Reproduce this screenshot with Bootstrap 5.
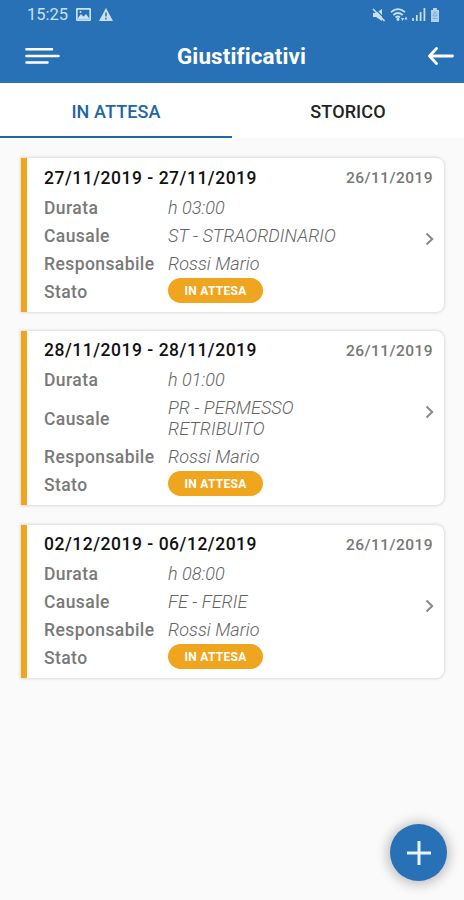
<!DOCTYPE html>
<html lang="it">
<head>
<meta charset="utf-8">
<meta name="viewport" content="width=device-width, initial-scale=1">
<title>Giustificativi</title>
<link href="https://cdn.jsdelivr.net/npm/bootstrap@5.3.0/dist/css/bootstrap.min.css" rel="stylesheet">
<style>
body{font-family:Roboto,"Liberation Sans",sans-serif;background:#fafafa;min-height:900px;overflow:hidden}
svg{display:block}
.topbar{background:#2871b6;height:83px;color:#fff}
.statusbar{height:29px;padding:0 24px 0 27px;color:#c9e1f5;font-size:16.5px}
.clock{padding-top:2px}
.titlebar{height:54px;padding:0 10px 0 25px}
.titlebar h1{font-size:22.4px;font-weight:700;line-height:56px;letter-spacing:.15px;padding-right:4px}
.tabs{height:55px;background:#fff}
.tabs a{font-size:18px;font-weight:500;color:#222;letter-spacing:.1px;border-bottom:2px solid transparent;padding-top:3px}
.tabs a.current{color:#2265a3;border-color:#1d66a8}
.requests{padding:20px 20px 0 21px;gap:19px}
.request{border:0;border-left:6px solid #f0a51f;border-radius:0 8px 8px 0;box-shadow:0 0 3px 1px rgba(0,0,0,.13);padding:5px 10px 6px 17px}
.period{font-size:17.5px;font-weight:500;color:#111;letter-spacing:.52px;line-height:30px;height:29px}
.sent{font-size:15.5px;font-weight:500;color:#777;letter-spacing:.45px;line-height:29px;padding:1px 1px 0 0;height:29px}
.fields{display:grid;grid-template-columns:124px 185px;grid-auto-rows:minmax(28px,auto);align-items:center;padding-top:2px;margin:0}
.request + .request .fields{padding-top:1px}
.request + .request .period{line-height:29px}
.request:last-child{margin-top:1px}
.fields dt{font-size:17.5px;font-weight:500;color:#797979;letter-spacing:.42px;line-height:28px}
.fields dd{font-size:18px;font-weight:300;font-style:italic;color:#646464;margin:0;padding-bottom:1px;line-height:21px;letter-spacing:.06px}
.fields dd.two-lines{padding:3px 0 4px}
.state{font-size:12px;font-weight:700;font-style:normal;letter-spacing:.3px;background:#f0a51f;width:95px;height:25px;padding:0;line-height:26px;display:block;margin-top:-2px}
.chevron{margin-bottom:20px}
.chevron-tall{margin-bottom:41px}
.fab{width:57px;height:57px;right:17px;bottom:19px;background:#2871b6;box-shadow:0 1px 12px 3px rgba(0,0,0,.23)}
</style>
</head>
<body>
<header class="topbar">
  <div class="statusbar d-flex align-items-center justify-content-between">
    <div class="d-flex align-items-center">
      <span class="clock">15:25</span>
      <svg class="ms-2" width="15" height="13" viewBox="0 0 15 13"><rect x=".8" y=".8" width="13.4" height="11.4" rx="1" fill="none" stroke="currentColor" stroke-width="1.8"/><path d="M2 10l3-4 2.5 2.5L10 6l3 4v1H2z" fill="currentColor"/><circle cx="4.5" cy="4" r="1" fill="currentColor"/></svg>
      <svg class="ms-2" width="14" height="13" viewBox="0 0 14 13"><path d="M7 0l7 13H0z" fill="currentColor"/><path d="M7 4.5v4M7 9.8v1.6" stroke="#2871b6" stroke-width="1.5"/></svg>
    </div>
    <div class="d-flex align-items-center">
      <svg width="14" height="14" viewBox="0 0 14 14"><path d="M1 5h3l6-4v12L4 9H1z" fill="currentColor"/><path d="M2.500 0L14 12" stroke="#2871b6" stroke-width="1.200"/><path d="M1 1l11.500 12" stroke="currentColor" stroke-width="1.600"/></svg>
      <svg class="ms-1" width="18" height="14" viewBox="0 0 18 14"><path d="M1 4.2Q8 -1.8 15 4.2M3.3 7Q8 3 12.7 7M5.6 9.5Q8 7.5 10 9.5" fill="none" stroke="currentColor" stroke-width="1.7"/><circle cx="8" cy="11.5" r="1.4" fill="currentColor"/><path d="M11 10h3l-1.5 3zM14.5 11.5h3L16 8.5z" fill="currentColor"/></svg>
      <svg class="ms-1" width="14" height="13" viewBox="0 0 14 13"><path d="M1 13v-3M4.8 13V7M8.6 13V4M12.4 13V0" stroke="currentColor" stroke-width="1.7"/></svg>
      <svg class="ms-1" width="10" height="14" viewBox="0 0 10 14"><path d="M3 0h4v2h2v12H1V2h2z" fill="currentColor" opacity=".85"/><path d="M5 3.500l2 4.500H3zM2.500 10.500h5" stroke="#2871b6" fill="none" opacity=".35"/></svg>
    </div>
  </div>
  <div class="titlebar d-flex align-items-center justify-content-between">
    <svg width="35" height="18" viewBox="0 0 35 18"><path d="M1.500 2.300H27M1.500 9H33.500M1.500 15.500H22.500" stroke="#fff" stroke-width="2.600" stroke-linecap="round"/></svg>
    <h1 class="m-0">Giustificativi</h1>
    <svg width="27" height="18" viewBox="0 0 27 18"><path d="M9.500 1.500L2.500 9l7 7.500M3 9h22.500" fill="none" stroke="#fff" stroke-width="2.800" stroke-linecap="round" stroke-linejoin="round"/></svg>
  </div>
</header>
<nav class="tabs d-flex">
  <a class="current flex-fill w-50 d-flex align-items-center justify-content-center text-decoration-none" href="#">IN ATTESA</a>
  <a class="flex-fill w-50 d-flex align-items-center justify-content-center text-decoration-none" href="#">STORICO</a>
</nav>
<main class="requests d-flex flex-column">
  <article class="request card">
    <div class="d-flex justify-content-between"><span class="period">27/11/2019 - 27/11/2019</span><span class="sent">26/11/2019</span></div>
    <div class="d-flex justify-content-between align-items-center">
      <dl class="fields"><dt>Durata</dt><dd>h 03:00</dd><dt>Causale</dt><dd>ST - STRAORDINARIO</dd><dt>Responsabile</dt><dd>Rossi Mario</dd><dt>Stato</dt><dd><span class="state badge rounded-pill">IN ATTESA</span></dd></dl>
      <svg class="chevron" width="9" height="14" viewBox="0 0 9 14"><path d="M1.500 1.500L7.200 7l-5.700 5.500" fill="none" stroke="#888" stroke-width="2"/></svg>
    </div>
  </article>
  <article class="request card">
    <div class="d-flex justify-content-between"><span class="period">28/11/2019 - 28/11/2019</span><span class="sent">26/11/2019</span></div>
    <div class="d-flex justify-content-between align-items-center">
      <dl class="fields"><dt>Durata</dt><dd>h 01:00</dd><dt>Causale</dt><dd class="two-lines">PR - PERMESSO<br>RETRIBUITO</dd><dt>Responsabile</dt><dd>Rossi Mario</dd><dt>Stato</dt><dd><span class="state badge rounded-pill">IN ATTESA</span></dd></dl>
      <svg class="chevron-tall" width="9" height="14" viewBox="0 0 9 14"><path d="M1.500 1.500L7.200 7l-5.700 5.500" fill="none" stroke="#888" stroke-width="2"/></svg>
    </div>
  </article>
  <article class="request card">
    <div class="d-flex justify-content-between"><span class="period">02/12/2019 - 06/12/2019</span><span class="sent">26/11/2019</span></div>
    <div class="d-flex justify-content-between align-items-center">
      <dl class="fields"><dt>Durata</dt><dd>h 08:00</dd><dt>Causale</dt><dd>FE - FERIE</dd><dt>Responsabile</dt><dd>Rossi Mario</dd><dt>Stato</dt><dd><span class="state badge rounded-pill">IN ATTESA</span></dd></dl>
      <svg class="chevron" width="9" height="14" viewBox="0 0 9 14"><path d="M1.500 1.500L7.200 7l-5.700 5.500" fill="none" stroke="#888" stroke-width="2"/></svg>
    </div>
  </article>
</main>
<button class="fab btn rounded-circle border-0 position-fixed p-0 d-flex align-items-center justify-content-center" aria-label="Aggiungi">
  <svg width="26" height="26" viewBox="0 0 26 26"><path d="M13 1v24M1 13h24" stroke="#e8f4ff" stroke-width="3"/></svg>
</button>
<script src="https://cdn.jsdelivr.net/npm/bootstrap@5.3.0/dist/js/bootstrap.bundle.min.js"></script>
</body>
</html>
